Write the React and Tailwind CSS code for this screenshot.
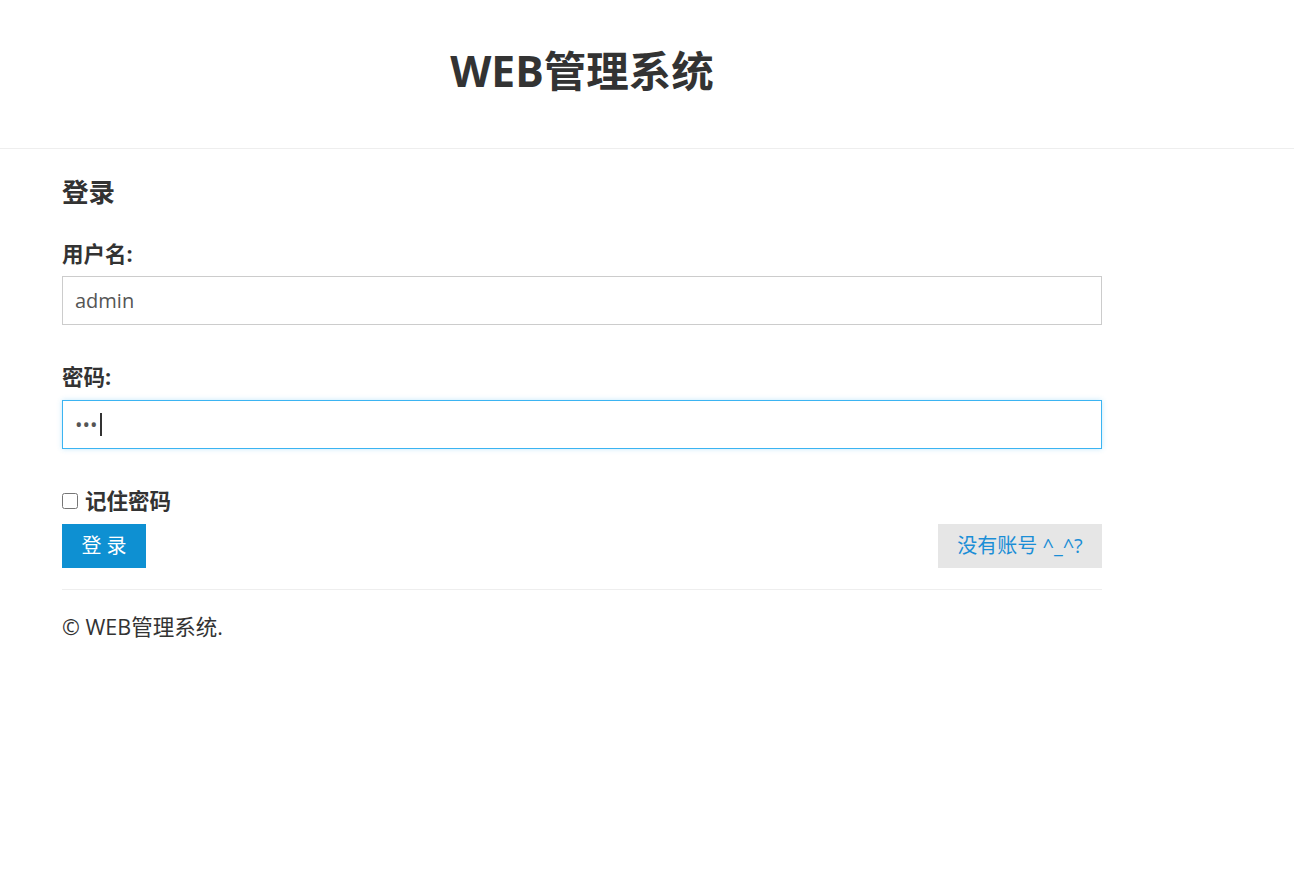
import React from "react";

export default function App() {
  return (
    <div className="min-h-[890px] bg-white text-[#333] font-['Open_Sans','Noto_Sans_CJK_SC',sans-serif]">
      <header className="h-[149px] border-b border-[#eee] pt-[49px]">
        <div className="ml-[62px] w-[1040px]">
          <h1 className="text-center text-[42.5px] leading-[43px] font-bold">WEB管理系统</h1>
        </div>
      </header>

      <main className="ml-[62px] w-[1040px]">
        <h2 className="mt-[30px] text-[26.5px] leading-[26px] font-bold">登录</h2>

        <form onSubmit={(e) => e.preventDefault()}>
          <label className="mt-[38px] block text-[21.5px] leading-[22px] font-bold" htmlFor="username">
            用户名:
          </label>
          <input
            id="username"
            type="text"
            readOnly
            value="admin"
            className="mt-[11px] block h-[49px] w-full border border-[#ccc] bg-white px-[12px] text-[20px] text-[#555] outline-none"
          />

          <label className="mt-[41px] block text-[21.5px] leading-[22px] font-bold" htmlFor="password">
            密码:
          </label>
          <div className="relative mt-[12px]">
            <input
              id="password"
              type="password"
              readOnly
              value="123"
              className="block h-[49px] w-full border border-[#3bb4f2] bg-white px-[12px] text-[20px] text-[#555] outline-none shadow-[0_0_5px_rgba(59,180,242,0.3)]"
            />
            <span className="absolute left-[38px] top-[13px] h-[23px] w-[2px] bg-[#333]" />
          </div>

          <div className="mt-[41px] flex h-[22px] items-center gap-[7px]">
            <input id="remember" type="checkbox" className="h-[16px] w-[16px]" />
            <label htmlFor="remember" className="text-[21.5px] leading-[22px] font-bold">
              记住密码
            </label>
          </div>

          <div className="mt-[12px] flex items-center justify-between">
            <button
              type="submit"
              className="flex h-[44px] w-[84px] items-center justify-center bg-[#0e90d2] text-[20px] text-white"
            >
              登 录
            </button>
            <button
              type="button"
              className="flex h-[44px] w-[164px] items-center justify-center bg-[#e6e6e6] text-[20px] text-[#1b8ed6]"
            >
              没有账号 ^_^?
            </button>
          </div>
        </form>

        <hr className="mt-[21px] border-t border-[#eee]" />
        <p className="mt-[26px] text-[21.5px] leading-[22px]">© WEB管理系统.</p>
      </main>
    </div>
  );
}
